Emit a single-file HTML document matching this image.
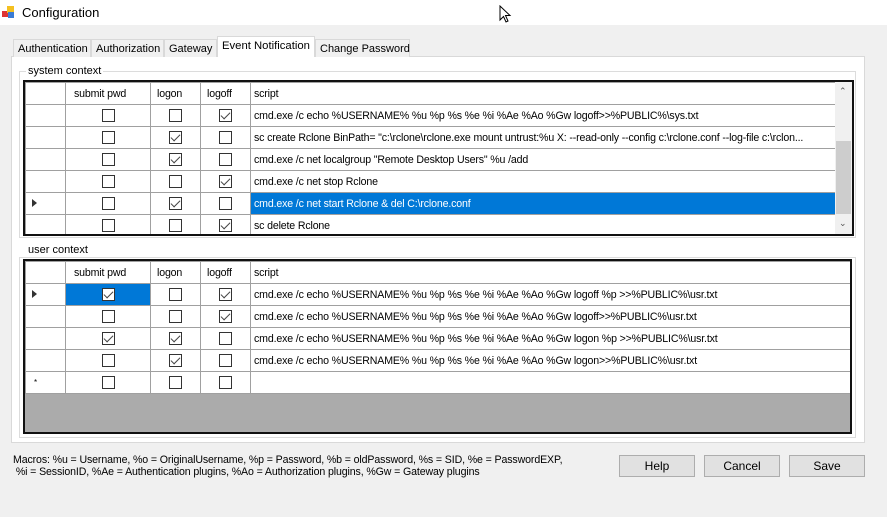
<!DOCTYPE html><html><head><style>
*{box-sizing:border-box;margin:0;padding:0}
body{width:887px;height:517px;background:#f0f0f0;font-family:"Liberation Sans",sans-serif;font-size:11px;color:#000;position:relative;overflow:hidden}
.a{position:absolute}
.title{left:0;top:0;width:887px;height:25px;background:#fff}
.tab{height:18px;top:39px;border:1px solid #d9d9d9;border-bottom:none;background:#f0f0f0;padding:3px 4px 0;white-space:nowrap;font-size:11px}
.page{left:11px;top:56px;width:854px;height:387px;background:#fff;border:1px solid #d9d9d9}
.gb{border:1px solid #dcdcdc}
.gl{background:#fff;padding:0 2px;font-size:11px}
table{border-collapse:collapse;table-layout:fixed;background:#fff}
td{border:1px solid #a0a0a0;height:22px;padding:0 0 0 3px;white-space:nowrap;overflow:hidden;font-size:10.6px;letter-spacing:-0.15px}
td.c{text-align:center;padding:0}
.cb{display:inline-block;width:13px;height:13px;border:1px solid #333;vertical-align:middle;background:#fff;position:relative}
.cb.k:after{content:"";position:absolute;left:3px;top:0px;width:4px;height:8px;border:solid #444;border-width:0 1px 1px 0;transform:rotate(45deg)}
.sel{background:#0078d7;color:#fff}
.arr{display:inline-block;width:0;height:0;border-top:4px solid transparent;border-bottom:4px solid transparent;border-left:5px solid #333;margin-left:3px}
.btn{top:455px;width:76px;height:22px;background:#e1e1e1;border:1px solid #adadad;text-align:center;line-height:20px;font-size:12px}
</style></head><body>
<div class="a title"></div>
<div class="a" style="left:2px;top:6px;width:12px;height:12px">
<div class="a" style="left:0;top:5px;width:6px;height:6px;background:#d33"></div>
<div class="a" style="left:5px;top:0;width:7px;height:7px;background:#f4c020"></div>
<div class="a" style="left:6px;top:6px;width:6px;height:6px;background:#3a7bd5"></div></div>
<div class="a" style="left:22px;top:5px;font-size:13px">Configuration</div>
<svg class="a" style="left:499px;top:5px" width="14" height="20"><path d="M1 1 L1 15 L4.5 11.5 L7 17 L9 16 L6.5 10.5 L11 10.5 Z" fill="#fff" stroke="#000"/></svg>
<div class="a page"></div>
<div class="a tab" style="left:13px;width:78px">Authentication</div>
<div class="a tab" style="left:91px;width:73px">Authorization</div>
<div class="a tab" style="left:164px;width:53px">Gateway</div>
<div class="a tab" style="left:217px;width:98px;top:36px;height:21px;background:#fff;padding-top:3px;font-size:11.3px">Event Notification</div>
<div class="a tab" style="left:315px;width:95px">Change Password</div>

<div class="a gb" style="left:19px;top:71px;width:837px;height:167px"></div>
<div class="a gl" style="left:26px;top:65px">system context</div>
<div class="a" style="left:23px;top:80px;width:831px;height:156px;border:2px solid #111;background:#fff;overflow:hidden">
<table style="width:811px">
<colgroup><col style="width:40px"><col style="width:85px"><col style="width:50px"><col style="width:50px"><col></colgroup>
<tr><td style="height:21px"></td><td style="padding-left:8px">submit pwd</td><td style="padding-left:6px">logon</td><td style="padding-left:6px">logoff</td><td>script</td></tr>
<tr><td></td><td class="c"><span class="cb"></span></td><td class="c"><span class="cb"></span></td><td class="c"><span class="cb k"></span></td><td>cmd.exe /c echo %USERNAME% %u %p %s %e %i %Ae %Ao %Gw logoff&gt;&gt;%PUBLIC%\sys.txt</td></tr>
<tr><td></td><td class="c"><span class="cb"></span></td><td class="c"><span class="cb k"></span></td><td class="c"><span class="cb"></span></td><td>sc create Rclone BinPath= "c:\rclone\rclone.exe mount untrust:%u X: --read-only --config c:\rclone.conf --log-file c:\rclon...</td></tr>
<tr><td></td><td class="c"><span class="cb"></span></td><td class="c"><span class="cb k"></span></td><td class="c"><span class="cb"></span></td><td>cmd.exe /c net localgroup "Remote Desktop Users" %u /add</td></tr>
<tr><td></td><td class="c"><span class="cb"></span></td><td class="c"><span class="cb"></span></td><td class="c"><span class="cb k"></span></td><td>cmd.exe /c net stop Rclone</td></tr>
<tr><td><span class="arr"></span></td><td class="c"><span class="cb"></span></td><td class="c"><span class="cb k"></span></td><td class="c"><span class="cb"></span></td><td class="sel">cmd.exe /c net start Rclone &amp; del C:\rclone.conf</td></tr>
<tr><td></td><td class="c"><span class="cb"></span></td><td class="c"><span class="cb"></span></td><td class="c"><span class="cb k"></span></td><td>sc delete Rclone</td></tr>
</table>
<div class="a" style="right:0;top:0;width:17px;height:152px;background:#f0f0f0">
<div class="a" style="left:1px;top:59px;width:15px;height:73px;background:#cdcdcd"></div>
<div class="a" style="left:4px;top:4px;font-size:9px;color:#555">&#8963;</div>
<div class="a" style="left:4px;top:136px;font-size:9px;color:#555">&#8964;</div>
</div></div>

<div class="a gb" style="left:19px;top:257px;width:837px;height:181px"></div>
<div class="a gl" style="left:26px;top:244px">user context</div>
<div class="a" style="left:23px;top:259px;width:829px;height:175px;border:2px solid #111;background:#ababab;overflow:hidden">
<table style="width:826px">
<colgroup><col style="width:40px"><col style="width:85px"><col style="width:50px"><col style="width:50px"><col></colgroup>
<tr><td></td><td style="padding-left:8px">submit pwd</td><td style="padding-left:6px">logon</td><td style="padding-left:6px">logoff</td><td>script</td></tr>
<tr><td><span class="arr"></span></td><td class="c sel"><span class="cb k"></span></td><td class="c"><span class="cb"></span></td><td class="c"><span class="cb k"></span></td><td>cmd.exe /c echo %USERNAME% %u %p %s %e %i %Ae %Ao %Gw logoff %p &gt;&gt;%PUBLIC%\usr.txt</td></tr>
<tr><td></td><td class="c"><span class="cb"></span></td><td class="c"><span class="cb"></span></td><td class="c"><span class="cb k"></span></td><td>cmd.exe /c echo %USERNAME% %u %p %s %e %i %Ae %Ao %Gw logoff&gt;&gt;%PUBLIC%\usr.txt</td></tr>
<tr><td></td><td class="c"><span class="cb k"></span></td><td class="c"><span class="cb k"></span></td><td class="c"><span class="cb"></span></td><td>cmd.exe /c echo %USERNAME% %u %p %s %e %i %Ae %Ao %Gw logon %p &gt;&gt;%PUBLIC%\usr.txt</td></tr>
<tr><td></td><td class="c"><span class="cb"></span></td><td class="c"><span class="cb k"></span></td><td class="c"><span class="cb"></span></td><td>cmd.exe /c echo %USERNAME% %u %p %s %e %i %Ae %Ao %Gw logon&gt;&gt;%PUBLIC%\usr.txt</td></tr>
<tr><td style="font-size:8px;padding-left:8px">*</td><td class="c"><span class="cb"></span></td><td class="c"><span class="cb"></span></td><td class="c"><span class="cb"></span></td><td></td></tr>
</table></div>

<div class="a" style="left:13px;top:454px;font-size:10.6px;line-height:12px;letter-spacing:-0.12px">Macros: %u = Username, %o = OriginalUsername, %p = Password, %b = oldPassword, %s = SID, %e = PasswordEXP,<br>&nbsp;%i = SessionID, %Ae = Authentication plugins, %Ao = Authorization plugins, %Gw = Gateway plugins</div>
<div class="a btn" style="left:619px">Help</div>
<div class="a btn" style="left:704px">Cancel</div>
<div class="a btn" style="left:789px">Save</div>
</body></html>
